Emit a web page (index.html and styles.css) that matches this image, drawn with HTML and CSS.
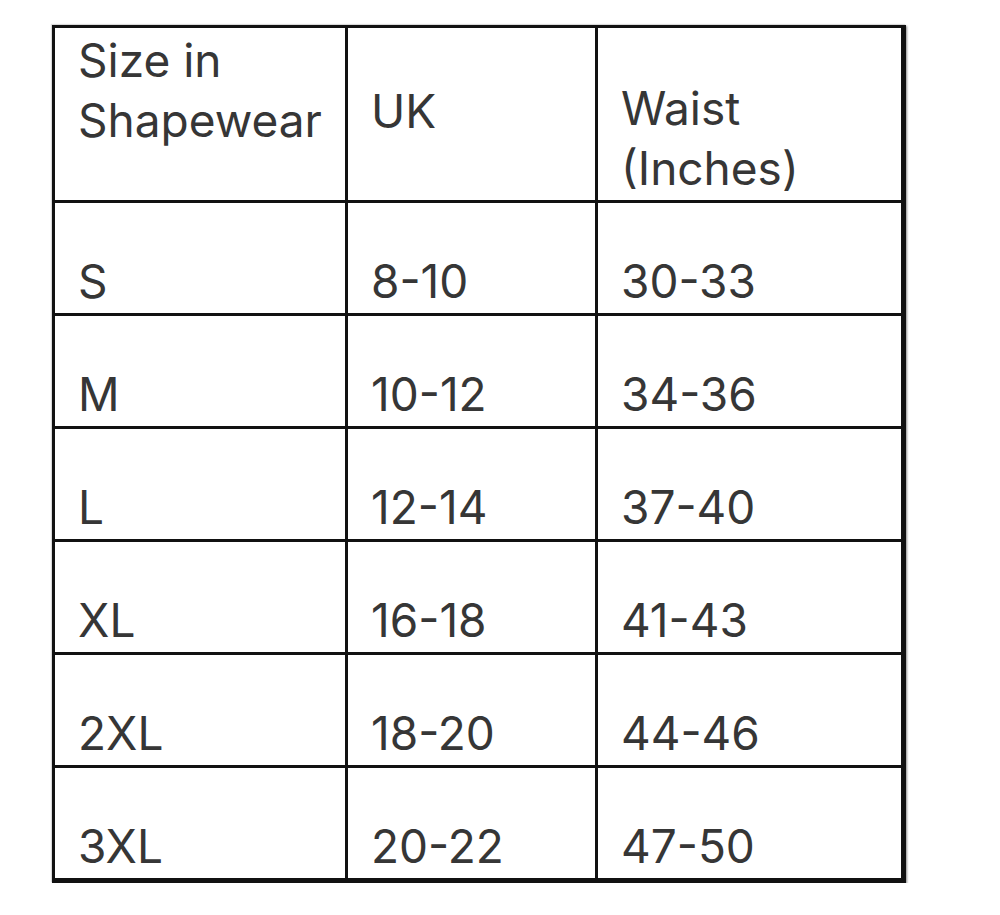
FILE: index.html
```html
<!DOCTYPE html>
<html lang="en">
<head>
<meta charset="utf-8">
<title>Size chart</title>
<link rel="stylesheet" href="styles.css">
</head>
<body>
<table class="chart">
  <tr class="head">
    <td class="c1 top">Size in<br>Shapewear</td>
    <td class="c2 mid">UK</td>
    <td class="c3">Waist<br>(Inches)</td>
  </tr>
  <tr><td class="c1">S</td><td class="c2">8-10</td><td class="c3">30-33</td></tr>
  <tr><td class="c1">M</td><td class="c2">10-12</td><td class="c3">34-36</td></tr>
  <tr><td class="c1">L</td><td class="c2">12-14</td><td class="c3">37-40</td></tr>
  <tr><td class="c1">XL</td><td class="c2">16-18</td><td class="c3">41-43</td></tr>
  <tr><td class="c1">2XL</td><td class="c2">18-20</td><td class="c3">44-46</td></tr>
  <tr class="last"><td class="c1">3XL</td><td class="c2">20-22</td><td class="c3">47-50</td></tr>
</table>
</body>
</html>
```
FILE: styles.css
```css
html, body {
  margin: 0;
  padding: 0;
  background: #ffffff;
}

body {
  font-family: "Inter", "Liberation Sans", sans-serif;
  color: #363636;
}

.chart {
  margin: 25px 0 0 52px;
  width: 854px;
  table-layout: fixed;
  border-collapse: separate;
  border-spacing: 0;
  border-top: 3px solid #111111;
  border-left: 3px solid #111111;
  box-shadow: -1px -1px 1px rgba(0, 0, 0, 0.12), 1px 1px 2px rgba(0, 0, 0, 0.45);
}

.chart td {
  box-sizing: border-box;
  border-right: 3px solid #111111;
  border-bottom: 3px solid #111111;
  padding: 0 0 2px 23px;
  height: 113px;
  vertical-align: bottom;
  font-size: 46px;
  line-height: 60px;
  white-space: nowrap;
}

.chart .c1 { width: 293px; }
.chart .c2 { width: 250px; }
.chart .c3 { width: 308px; border-right-width: 5px; }

.chart .head td { height: 175px; }
.chart .head .top { vertical-align: top; padding-top: 2px; }
.chart .head .mid { vertical-align: middle; padding-bottom: 6px; }

.chart .last td { height: 115px; border-bottom-width: 5px; }
```
